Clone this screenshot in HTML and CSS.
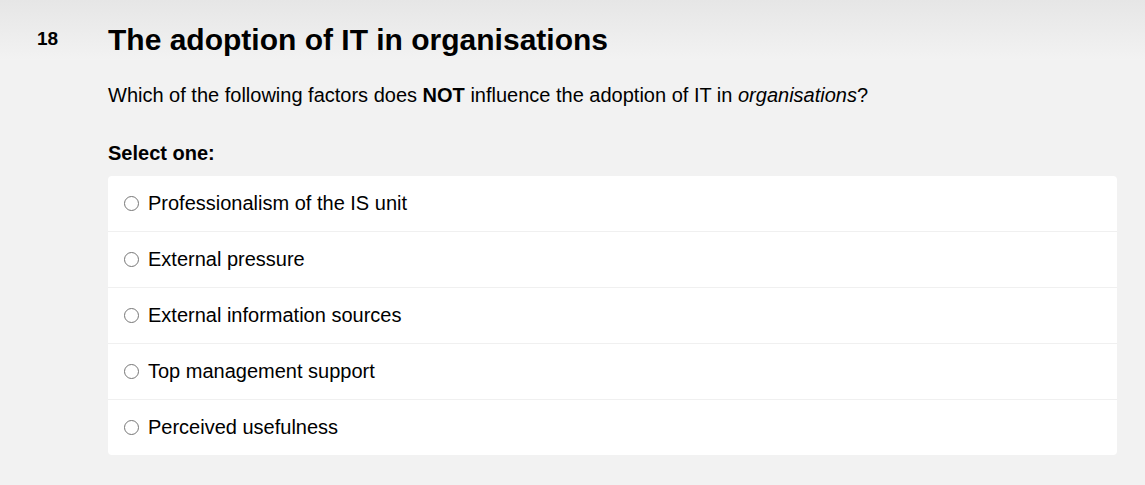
FILE: index.html
```
<!DOCTYPE html>
<html>
<head>
<meta charset="utf-8">
<link rel="stylesheet" href="styles.css">
</head>
<body>
<div class="page">
  <div class="qno">18</div>
  <div class="content">
    <h1 class="title">The adoption of IT in organisations</h1>
    <p class="question">Which of the following factors does <b>NOT</b> influence the adoption of IT in <i>organisations</i>?</p>
    <div class="prompt">Select one:</div>
    <div class="answers">
      <label class="opt"><span class="radio"></span><span>Professionalism of the IS unit</span></label>
      <label class="opt"><span class="radio"></span><span>External pressure</span></label>
      <label class="opt"><span class="radio"></span><span>External information sources</span></label>
      <label class="opt"><span class="radio"></span><span>Top management support</span></label>
      <label class="opt"><span class="radio"></span><span>Perceived usefulness</span></label>
    </div>
  </div>
</div>
</body>
</html>
```
FILE: styles.css
```
html, body {
  margin: 0;
  padding: 0;
  height: 100%;
}
body {
  background: linear-gradient(#e6e6e6 0px, #f2f2f2 60px, #f2f2f2 100%);
  font-family: "Liberation Sans", Arial, sans-serif;
  color: #000;
}
.page {
  display: flex;
  padding: 0 28px 0 0;
}
.qno {
  width: 108px;
  box-sizing: border-box;
  padding: 28px 0 0 37px;
  font-size: 19px;
  font-weight: bold;
}
.content {
  flex: 1;
}
.title {
  margin: 22px 0 0 0;
  font-size: 30px;
  font-weight: bold;
  line-height: 36px;
}
.question {
  margin: 23px 0 0 0;
  font-size: 20px;
  line-height: 28px;
}
.prompt {
  margin: 30px 0 0 0;
  font-size: 20px;
  font-weight: bold;
  line-height: 28px;
}
.answers {
  margin-top: 9px;
  background: #fff;
  border-radius: 4px;
  display: flex;
  flex-direction: column;
}
.opt {
  display: flex;
  align-items: center;
  height: 55px;
  padding-left: 16px;
  font-size: 20px;
  border-top: 1px solid #f0f0f0;
}
.opt:first-child {
  border-top: none;
}
.radio {
  width: 13px;
  height: 13px;
  border: 1px solid #767676;
  border-radius: 50%;
  margin: 0 9px 0 0;
  flex: none;
}
```
